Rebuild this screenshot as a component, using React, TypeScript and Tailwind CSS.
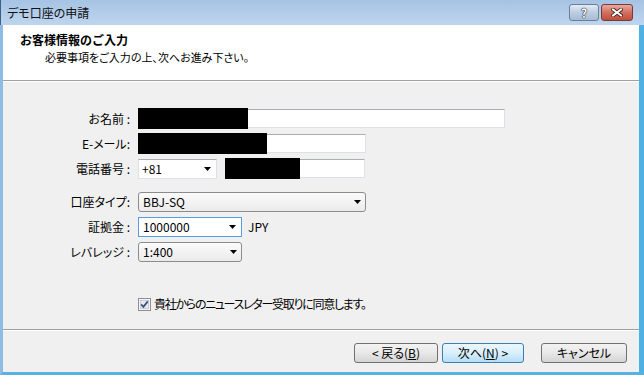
import React from "react";

const jp = "font-['Noto_Sans_CJK_JP','Liberation_Sans',sans-serif] [font-feature-settings:'palt']";

function Arrow() {
  return (
    <svg width="7" height="4" viewBox="0 0 7 4" className="shrink-0">
      <path d="M0 0h7L3.5 4z" fill="#000" />
    </svg>
  );
}

function Label({ children }: { children: React.ReactNode }) {
  return <div className="w-[127px] shrink-0 text-right pr-0 leading-[14px] whitespace-nowrap">{children}</div>;
}

function TextBox({ className, redact }: { className: string; redact?: string }) {
  return (
    <div className={`relative h-[19px] bg-white border border-[#dde1e7] border-t-[#abadb3] ${className}`}>
      {redact && <div className={`absolute left-[-1px] top-[-2px] bottom-[-2px] bg-black ${redact}`} />}
    </div>
  );
}

function DropList({ value, className }: { value: string; className: string }) {
  return (
    <div
      className={`h-[20px] flex items-center justify-between pl-[4px] pr-[4px] rounded-[3px] border border-[#8c8c8c] bg-gradient-to-b from-[#fbfbfb] to-[#ebebeb] ${className}`}
    >
      <span className="leading-[14px]">{value}</span>
      <Arrow />
    </div>
  );
}

function Button({ children, primary }: { children: React.ReactNode; primary?: boolean }) {
  return (
    <div
      className={`h-[20px] flex items-center justify-center rounded-[3px] border leading-[14px] ${
        primary
          ? "border-[#3c7fb1] bg-gradient-to-b from-[#ebf7fe] via-[#d9f0fc] to-[#b5ddf7]"
          : "border-[#707070] bg-gradient-to-b from-[#f3f3f3] via-[#e8e8e8] to-[#d4d4d4]"
      }`}
    >
      {children}
    </div>
  );
}

export default function App() {
  return (
    <div className={`w-[644px] h-[375px] flex flex-col overflow-hidden text-[12px] text-black ${jp}`}>
      {/* title bar */}
      <div className="h-[25px] shrink-0 flex items-center justify-between pl-[6px] pr-[11px] border-l border-[#3d5f80] bg-gradient-to-b from-[#a6c3e4] to-[#bed5ee]">
        <span className="text-[12px] leading-[14px] text-[#111]">デモ口座の申請</span>
        <div className="flex gap-[2px] self-start mt-[4px]">
          <div className="w-[30px] h-[17px] rounded-[3px] border border-[#6e7f94] bg-gradient-to-b from-[#e2ebf5] via-[#bccde2] to-[#a6bcd6] flex items-center justify-center">
            <span className="text-white font-bold text-[12px] leading-[12px] [text-shadow:0_0_1px_#223,0_0_1px_#223,0_0_1px_#223]">?</span>
          </div>
          <div className="w-[32px] h-[17px] rounded-[3px] border border-[#7a3a33] bg-gradient-to-b from-[#e8aa9e] via-[#d2705f] to-[#c04f3c] flex items-center justify-center">
            <svg width="12" height="9" viewBox="0 0 12 9">
              <path d="M2 1.5L10 7.5M10 1.5L2 7.5" stroke="#3b1a16" strokeWidth="3.6" strokeLinecap="square" />
              <path d="M2 1.5L10 7.5M10 1.5L2 7.5" stroke="#fff" strokeWidth="2" strokeLinecap="square" />
            </svg>
          </div>
        </div>
      </div>

      {/* client area */}
      <div className="flex-1 flex flex-col border-l-[3px] border-r-[5px] border-b-[3px] border-l-[#8fbbe4] border-r-[#4fb0e3] border-b-[#56b2e0] bg-[#f0f0f0]">
        {/* header */}
        <div className="h-[55px] shrink-0 bg-white pt-[8px]">
          <div className="pl-[17px] font-bold text-[12px] leading-[14px] [font-feature-settings:normal]">お客様情報のご入力</div>
          <div className="pl-[42px] mt-[3px] text-[11px] leading-[14px]">必要事項をご入力の上、次へお進み下さい。</div>
        </div>
        <div className="h-[2px] shrink-0 border-t border-[#a0a0a0] bg-white" />

        {/* form */}
        <div className="flex-1 flex flex-col pt-[24px]">
          <div className="h-[25px] flex items-center">
            <Label>お名前 :</Label>
            <TextBox className="ml-[8px] w-[367px]" redact="w-[110px]" />
          </div>
          <div className="h-[25px] flex items-center">
            <Label>E-メール:</Label>
            <TextBox className="ml-[8px] w-[228px]" redact="w-[129px]" />
          </div>
          <div className="h-[25px] flex items-center">
            <Label>電話番号 :</Label>
            <div className="ml-[8px] w-[79px] h-[20px] flex items-center justify-between pl-[3px] pr-[5px] bg-white border border-[#dde1e7] border-t-[#abadb3] leading-[14px]">
              <span>+81</span>
              <Arrow />
            </div>
            <TextBox className="ml-[8px] w-[140px]" redact="w-[75px]" />
          </div>

          <div className="h-[25px] mt-[8px] flex items-center">
            <Label>口座タイプ:</Label>
            <DropList value="BBJ-SQ" className="ml-[8px] w-[228px]" />
          </div>
          <div className="h-[25px] flex items-center">
            <Label>証拠金 :</Label>
            <div className="ml-[8px] w-[104px] h-[20px] flex items-center justify-between pl-[4px] pr-[5px] bg-white border border-[#569de5] leading-[14px]">
              <span>1000000</span>
              <Arrow />
            </div>
            <span className="ml-[6px] leading-[14px]">JPY</span>
          </div>
          <div className="h-[26px] flex items-center">
            <Label>レバレッジ :</Label>
            <DropList value="1:400" className="ml-[8px] w-[104px]" />
          </div>

          <div className="mt-[29px] h-[20px] flex items-center pl-[135px] gap-[3px]">
            <svg width="13" height="13" viewBox="0 0 13 13" className="shrink-0">
              <rect x="0.5" y="0.5" width="12" height="12" fill="#f4f4f4" stroke="#8e8f8f" />
              <rect x="2.5" y="2.5" width="8" height="8" fill="#e6eaf0" stroke="#c9ced6" />
              <path d="M3.2 6.4L5.4 8.8L9.8 3.4" fill="none" stroke="#3b4f88" strokeWidth="1.8" />
            </svg>
            <span className="leading-[14px] tracking-[-1.3px]">貴社からのニュースレター受取りに同意します。</span>
          </div>
        </div>

        {/* bottom buttons */}
        <div className="h-[2px] shrink-0 border-t border-[#a0a0a0] bg-white" />
        <div className="h-[41px] shrink-0 flex items-start pt-[12px] pl-[351px]">
          <div className="w-[84px]">
            <Button>
              &lt; 戻る(<span className="underline">B</span>)
            </Button>
          </div>
          <div className="w-[82px] ml-[4px]">
            <Button primary>
              次へ(<span className="underline">N</span>) &gt;
            </Button>
          </div>
          <div className="w-[86px] ml-[17px]">
            <Button>キャンセル</Button>
          </div>
        </div>
      </div>
    </div>
  );
}
